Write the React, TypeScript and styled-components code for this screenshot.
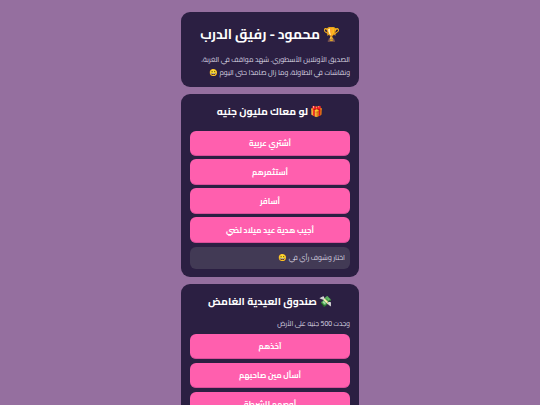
import React from "react";
import styled, { createGlobalStyle } from "styled-components";

const Global = createGlobalStyle`
  html, body { margin: 0; padding: 0; height: 405px; overflow: hidden; background: #956f9f; }
  body { font-family: "Cairo", "Noto Color Emoji", "Noto Sans", sans-serif; color: #fff; }
`;

const Page = styled.main`
  direction: rtl;
  display: flex;
  flex-direction: column;
  align-items: center;
  gap: 7px;
  padding-top: 12px;
`;

const Card = styled.section`
  width: 178px;
  box-sizing: border-box;
  padding: 8px 9px;
  background: #2b1f42;
  border-radius: 9px;
  display: flex;
  flex-direction: column;
`;

const HeroTitle = styled.h1`
  margin: 4px 0 9px;
  font-size: 13.6px;
  line-height: 20px;
  font-weight: 660;
  text-align: center;
`;

const Title = styled.h2<{ $mb: number }>`
  margin: 0 0 ${(p) => p.$mb}px;
  font-size: 10.4px;
  line-height: 18px;
  font-weight: 660;
  text-align: center;
`;

const Paragraph = styled.p`
  margin: 0;
  font-size: 7px;
  line-height: 13px;
  color: #dcd8e3;
`;

const Prompt = styled.p`
  margin: 0 0 4px;
  font-size: 6.8px;
  line-height: 12px;
  color: #dcd8e3;
`;

const Options = styled.div`
  display: flex;
  flex-direction: column;
  gap: 3.3px;
`;

const Option = styled.button`
  height: 25.7px;
  padding: 0;
  border: 0;
  border-bottom: 1px solid #d94f99;
  border-radius: 6px;
  background: #ff5fae;
  color: #fff;
  font: 700 7.8px "Cairo", "Noto Color Emoji", sans-serif;
`;

const Feedback = styled.div`
  margin-top: 3.5px;
  height: 22px;
  padding: 0 5px;
  display: flex;
  align-items: center;
  border-radius: 6px;
  background: #423a55;
  font-size: 7px;
  color: #dcd8e3;
`;

export default function App() {
  return (
    <>
      <Global />
      <Page>
        <Card>
          <HeroTitle>🏆 محمود - رفيق الدرب</HeroTitle>
          <Paragraph>
            الصديق الأونلاين الأسطوري. شهد مواقف في الغربة، ونقاشات في الطاولة، وما زال صامدًا حتى اليوم 😄
          </Paragraph>
        </Card>
        <Card>
          <Title $mb={10.5}>🎁 لو معاك مليون جنيه</Title>
          <Options>
            <Option>أشتري عربية</Option>
            <Option>أستثمرهم</Option>
            <Option>أسافر</Option>
            <Option>أجيب هدية عيد ميلاد لضي</Option>
          </Options>
          <Feedback>اختار وشوف رأي في 😄</Feedback>
        </Card>
        <Card>
          <Title $mb={8}>💸 صندوق العيدية الغامض</Title>
          <Prompt>وجدت 500 جنيه على الأرض</Prompt>
          <Options>
            <Option>آخذهم</Option>
            <Option>أسأل مين صاحبهم</Option>
            <Option>أوصهم للشرطة</Option>
          </Options>
        </Card>
      </Page>
    </>
  );
}
